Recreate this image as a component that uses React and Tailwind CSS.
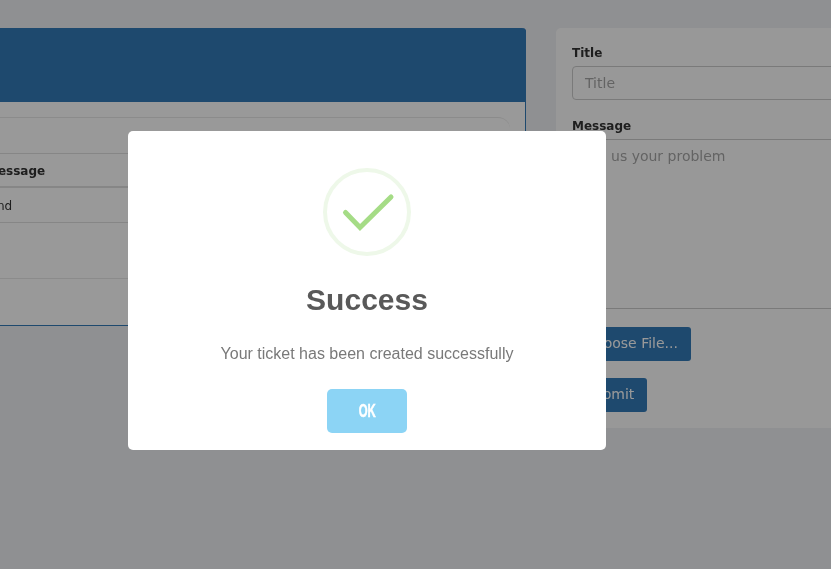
export default function App() {
  const sans = "font-['DejaVu_Sans',sans-serif]";
  return (
    <div className={`relative w-[831px] h-[569px] overflow-hidden bg-[#eff0f3] text-[12px] text-[#333333] ${sans}`}>
      <div className="flex items-start pt-[28px] -ml-[200px] w-[1331px] will-change-transform">
        <section className="w-[726px] h-[298px] shrink-0 rounded-[4px] border-x border-b border-[#337ab7] bg-white">
          <div className="h-[74px] -mx-px rounded-t-[4px] bg-[#337ab7]" />
          <div className="mx-[15px] mt-[15px] h-[200px] rounded-t-[12px] border-t border-[#e8e8e8]">
            <div className="h-[36px] border-b border-[#e0e0e0]" />
            <div className="flex h-[34px] items-center border-b-2 border-[#e0e0e0] pl-[170px] pt-[2px] font-bold">
              <span>Message</span>
            </div>
            <div className="flex h-[35px] items-center border-b border-[#e0e0e0] pl-[166px] pt-[2px]">
              <span>Send</span>
            </div>
            <div className="h-[56px] border-b border-[#e8e8e8]" />
          </div>
        </section>
        <section className="ml-[30px] w-[400px] h-[400px] shrink-0 rounded-[5px] bg-[#fefefe] px-[16px] pt-[17px]">
          <label className="block h-[21px] font-bold leading-[17px]">Title</label>
          <div className="flex h-[34px] items-center rounded-[4px] border border-[#cccccc] bg-[#fefefe] px-[12px] text-[14px] text-[#a6a6a6]">Title</div>
          <label className="mt-[18px] block h-[21px] font-bold leading-[17px]">Message</label>
          <div className="h-[170px] border-y border-[#cccccc] bg-[#fefefe] px-[12px] pt-[6px] text-[14px] leading-[21px] text-[#a6a6a6]">Tell us your problem</div>
          <div className="mt-[18px] flex h-[34px] w-[119px] items-center justify-center rounded-[3px] bg-[#337ab7] pb-[1px] text-[14px] text-white">Choose File...</div>
          <div className="mt-[17px] flex h-[34px] w-[75px] items-center justify-center rounded-[3px] bg-[#337ab7] pb-[1px] text-[14px] text-white">Submit</div>
        </section>
      </div>
      <div className="absolute inset-0 bg-[#000000]/40 pl-[128px] pt-[131px]">
        <div className="flex h-[319px] w-[478px] flex-col items-center rounded-[5px] bg-white pt-[37px] font-['Liberation_Sans',sans-serif] will-change-transform">
          <div className="h-[88px] w-[88px] shrink-0">
            <svg viewBox="0 0 88 88" width="88" height="88">
              <circle cx="44" cy="44" r="42" fill="none" stroke="#eef8e9" strokeWidth="4" />
              <path d="M22.5 44.5 L37 59.5 L68 29" fill="none" stroke="#a5dc86" strokeWidth="5" strokeLinecap="round" />
            </svg>
          </div>
          <h2 className="mt-[25px] text-[30px] font-bold leading-[38px] text-[#595959]">Success</h2>
          <p className="mt-[23px] text-[16px] leading-[24px] text-[#797979]">Your ticket has been created successfully</p>
          <div className="mt-[23px] flex h-[44px] w-[80px] items-center justify-center rounded-[5px] bg-[#8cd4f5]">
            <span className="inline-block scale-x-[0.6] text-[19px] font-bold text-white [-webkit-text-stroke:0.5px_white]">OK</span>
          </div>
        </div>
      </div>
    </div>
  );
}
